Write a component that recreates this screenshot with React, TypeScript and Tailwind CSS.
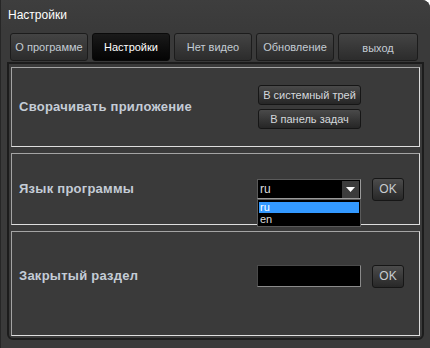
import React from "react";

const font = { fontFamily: '"Liberation Sans", Arial, sans-serif' };

function Tab({ label, active }: { label: string; active?: boolean }) {
  return (
    <div
      className={
        "flex h-[28px] w-[78px] items-center justify-center rounded-[3px] border text-[11px] " +
        (active
          ? "border-[#0a0a0a] bg-gradient-to-b from-[#1a1a1a] to-[#050505] text-white"
          : "border-[#1c1c1c] bg-gradient-to-b from-[#444444] to-[#2c2c2c] text-[#c4ccd4]")
      }
    >
      {label}
    </div>
  );
}

function SmallButton({ label }: { label: string }) {
  return (
    <div className="flex h-[20px] w-[103px] items-center justify-center rounded-[3px] border border-[#161616] bg-gradient-to-b from-[#4a4a4a] to-[#262626] text-[11px] text-[#d4d8dc]">
      {label}
    </div>
  );
}

function OkButton() {
  return (
    <div className="flex h-[23px] w-[32px] items-center justify-center rounded-[3px] border border-[#161616] bg-gradient-to-b from-[#4c4c4c] to-[#282828] text-[12px] text-[#c8ccd0]">
      OK
    </div>
  );
}

function Section({
  label,
  children,
  className,
}: {
  label: string;
  children: React.ReactNode;
  className: string;
}) {
  return (
    <div
      className={
        "flex items-center border border-t-[#a4a4a4] border-l-[#a4a4a4] border-r-[#dedede] border-b-[#dedede] pl-[7px] pr-[15px] " +
        className
      }
    >
      <div className="flex-1 text-[13px] font-bold tracking-[0.25px] text-[#c4ccd6]">{label}</div>
      {children}
    </div>
  );
}

export default function App() {
  return (
    <div
      style={font}
      className="relative h-[348px] w-[430px] overflow-hidden rounded-tr-[8px] border-l border-[#262626] bg-[#3a3a3a]"
    >
      <div className="flex h-[29px] items-center bg-gradient-to-b from-[#3e3e3e] to-[#3a3a3a] pl-[7px] text-[12px] text-white">
        Настройки
      </div>
      <div className="mt-[4px] flex gap-[4px] pl-[9px]">
        <Tab label="О программе" />
        <Tab label="Настройки" active />
        <Tab label="Нет видео" />
        <Tab label="Обновление" />
        <div className="flex h-[28px] w-[80px] items-center justify-center rounded-[3px] border border-[#1c1c1c] bg-gradient-to-b from-[#444444] to-[#2c2c2c] pt-[2px] text-[11px] text-[#c4ccd4]">
          выход
        </div>
      </div>
      <div className="ml-[6px] mt-[1px] flex h-[278px] w-[417px] flex-col gap-[6px] rounded-b-[6px] border-2 border-[#1c1c1c] bg-[#3a3a3a] px-[2px] pt-[3px]">
        <Section label="Сворачивать приложение" className="h-[80px]">
          <div className="flex flex-col gap-[4px] pr-[43px]">
            <SmallButton label="В системный трей" />
            <SmallButton label="В панель задач" />
          </div>
        </Section>
        <Section label="Язык программы" className="h-[72px]">
          <div className="flex items-center gap-[11px]">
            <div className="relative">
              <div className="flex h-[20px] w-[104px] items-center justify-between border border-t-[#5a5a5a] border-l-[#5a5a5a] border-r-[#9a9a9a] border-b-[#9a9a9a] bg-black pl-[2px] pr-[1px] text-[12px] text-[#dcdcdc]">
                <span>ru</span>
                <div className="flex h-[17px] w-[17px] items-center justify-center bg-[#3c3c3c]">
                  <svg width="9" height="5" viewBox="0 0 9 5">
                    <path d="M0 0 H9 L4.5 5 Z" fill="#ffffff" />
                  </svg>
                </div>
              </div>
              <div className="absolute left-0 top-[20px] z-10 flex h-[28px] w-[104px] flex-col gap-[1px] border border-[#5a5a5a] bg-black px-[1px] pt-[2px] text-[11px] text-[#dcdcdc]">
                <div className="flex h-[11px] items-center overflow-hidden bg-[#3399ff] pl-[1px] leading-[11px] text-white">ru</div>
                <div className="flex h-[11px] items-center overflow-hidden pl-[1px] leading-[11px]">en</div>
              </div>
            </div>
            <OkButton />
          </div>
        </Section>
        <Section label="Закрытый раздел" className="h-[105px] pb-[15px]">
          <div className="flex items-center gap-[11px]">
            <div className="h-[22px] w-[104px] border border-t-[#4a4a4a] border-l-[#4a4a4a] border-r-[#8a8a8a] border-b-[#8a8a8a] bg-black" />
            <OkButton />
          </div>
        </Section>
      </div>
    </div>
  );
}
